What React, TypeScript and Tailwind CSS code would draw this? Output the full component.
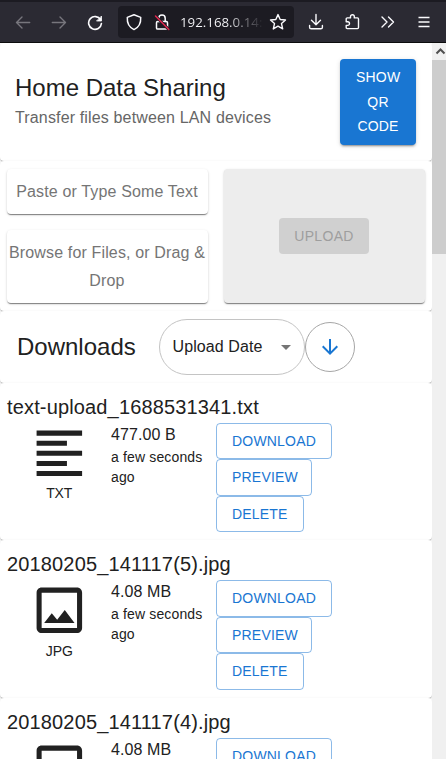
import React from "react";

const PAPER =
  "rounded bg-white shadow-[0px_2px_1px_-1px_rgba(0,0,0,0.2),0px_1px_1px_0px_rgba(0,0,0,0.14),0px_1px_3px_0px_rgba(0,0,0,0.12)]";

const RAISED =
  "rounded shadow-[0px_2px_1px_-1px_rgba(0,0,0,0.3),0px_1px_1px_0px_rgba(0,0,0,0.2),0px_1px_3px_0px_rgba(0,0,0,0.14)]";

function ToolIcon({ children, dim }: { children: React.ReactNode; dim?: boolean }) {
  return (
    <span className="flex w-9 shrink-0 justify-center">
      <Glyph className={dim ? "text-[#77767d]" : "text-[#fbfbfe]"}>{children}</Glyph>
    </span>
  );
}

function Glyph({ children, className }: { children: React.ReactNode; className?: string }) {
  return (
    <svg
      width="18"
      height="18"
      viewBox="0 0 18 18"
      fill="none"
      stroke="currentColor"
      strokeWidth="1.4"
      strokeLinecap="round"
      strokeLinejoin="round"
      className={`shrink-0 ${className ?? ""}`}
    >
      {children}
    </svg>
  );
}

function BrowserBar() {
  return (
    <header className="flex h-[43px] shrink-0 items-center border-t-2 border-b border-t-[#1c1b22] border-b-[#0c0c0d] bg-[#2b2a33] pl-[5px]">
      <ToolIcon dim>
        <path d="M15.7 9.500H2.500M8 4.100 2.500 9.500 8 14.900" />
      </ToolIcon>
      <ToolIcon dim>
        <path d="M2.300 9.500h13.200M10 4.100 15.500 9.500 10 14.900" />
      </ToolIcon>
      <ToolIcon>
        <path d="M14.600 6.800A6.400 6.400 0 1 0 15.400 10.600" strokeWidth="1.600" />
        <path d="M15.500 3.400v4.600h-4.600z" fill="currentColor" strokeWidth="0.800" />
      </ToolIcon>
      <div className="mr-1 ml-[5px] flex h-8 w-[176px] shrink-0 items-center rounded bg-[#1c1b22]">
        <Glyph className="ml-[7px] text-[#fbfbfe]">
          <path d="M9 1.800 15.700 4.400c.3 4.900-.9 9.500-6.700 12.200C3.200 13.900 2 9.300 2.300 4.400z" strokeWidth="1.500" />
        </Glyph>
        <Glyph className="ml-[10px] text-[#fbfbfe]">
          <path d="M5.800 8.500V5.300a3.200 3.200 0 0 1 6.400 0v3.200" strokeWidth="1.500" />
          <rect x="3.500" y="8.500" width="11" height="7.600" rx="1.200" strokeWidth="1.500" />
          <path d="M2.500 3 15.800 16.500" stroke="#1c1b22" strokeWidth="3" />
          <path d="M2.500 3 15.800 16.500" stroke="#e22850" strokeWidth="1.500" />
        </Glyph>
        <span className="ml-[9px] w-[84px] whitespace-nowrap bg-linear-to-r from-[#fbfbfe] from-55% to-[#1c1b22] bg-clip-text font-['Open_Sans',sans-serif] text-[13.3px] leading-5 text-transparent">
          192.168.0.14:
        </span>
        <Glyph className="ml-[5px] text-[#fbfbfe]">
          <path d="m9 1.600 2.200 4.900 5.300.5-4 3.600 1.200 5.300L9 13.200l-4.700 2.700 1.200-5.300-4-3.600 5.300-.5z" />
        </Glyph>
      </div>
      <ToolIcon>
        <path d="M9 1.500v10M4.500 7.300 9 11.700l4.500-4.400M2.600 12.500v1.700a1.600 1.600 0 0 0 1.600 1.600h9.600a1.600 1.600 0 0 0 1.600-1.600v-1.700" />
      </ToolIcon>
      <ToolIcon>
        <path d="M3.200 7.200V5.900a1 1 0 0 1 1-1h3.300V3.600a1.900 1.900 0 0 1 3.800 0v1.300h3.200a1 1 0 0 1 1 1v8.700a1 1 0 0 1-1 1H4.200a1 1 0 0 1-1-1v-2.200h1.500a1.500 1.500 0 0 0 0-3.600H3.200z" />
      </ToolIcon>
      <ToolIcon>
        <path d="M3 4 8 9l-5 5M9.500 4l5 5-5 5" />
      </ToolIcon>
      <ToolIcon>
        <path d="M3.500 4.500h11M3.500 9h11M3.500 13.500h11" strokeLinecap="butt" />
      </ToolIcon>
    </header>
  );
}

function OutlinedButton({ children, width }: { children: React.ReactNode; width: string }) {
  return (
    <button
      className={`h-[36.5px] rounded border border-[#1976d2]/50 pl-[15px] text-left text-sm leading-[24.5px] tracking-[0.2px] text-[#1976d2] ${width}`}
    >
      {children}
    </button>
  );
}

function FileCard({ name, kind, size }: { name: string; kind: "TXT" | "JPG"; size: string }) {
  return (
    <article className={`${PAPER} h-[157.5px] shrink-0 px-[7px] py-2`}>
      <h3 className="text-xl leading-8 tracking-[0.15px]">{name}</h3>
      <div className="grid grid-cols-4">
        <div className="flex flex-col items-center">
          <svg width="60.700" height="60.700" viewBox="0 0 24 24" fill="currentColor">
            {kind === "TXT" ? (
              <path d="M15 15H3v2h12v-2zm0-8H3v2h12V7zM3 13h18v-2H3v2zm0 8h18v-2H3v2zM3 3v2h18V3H3z" />
            ) : (
              <path d="M19 5v14H5V5h14m0-2H5c-1.100 0-2 .9-2 2v14c0 1.100.9 2 2 2h14c1.100 0 2-.9 2-2V5c0-1.100-.9-2-2-2zm-4.860 8.860-3 3.870L9 13.140 6 17h12l-3.860-5.140z" />
            )}
          </svg>
          <span className="text-sm leading-5 tracking-[-0.1px]">{kind}</span>
        </div>
        <div className="-ml-[0.5px]">
          <p className="text-base leading-6 tracking-[0.1px]">{size}</p>
          <p className="text-sm leading-5 tracking-[0.15px]">a few seconds ago</p>
        </div>
        <div className="col-span-2 flex flex-col items-start">
          <OutlinedButton width="w-[116px]">DOWNLOAD</OutlinedButton>
          <OutlinedButton width="w-[96px]">PREVIEW</OutlinedButton>
          <OutlinedButton width="w-[88px]">DELETE</OutlinedButton>
        </div>
      </div>
    </article>
  );
}

function Scrollbar() {
  return (
    <div className="flex w-[14px] shrink-0 flex-col bg-[#f0f0f0]">
      <svg width="14" height="17" viewBox="0 0 14 17" fill="none" stroke="#505050" strokeWidth="2">
        <path d="m4.500 10.500 4-4 4 4" />
      </svg>
      <div className="h-[194px] bg-[#cdcdcd]" />
    </div>
  );
}

export default function App() {
  return (
    <div className="flex h-[759px] w-[446px] flex-col overflow-hidden bg-white font-['Liberation_Sans',Arial,sans-serif] text-[#212121]">
      <BrowserBar />
      <div className="flex min-h-0 flex-1">
        <main className="flex flex-1 flex-col overflow-hidden">
          <section className={`${PAPER} flex h-[117.5px] shrink-0 items-center justify-between pr-4 pl-[15px]`}>
            <div>
              <h1 className="text-2xl leading-8">Home Data Sharing</h1>
              <p className="text-base leading-7 tracking-[0.15px] text-[#666666]">
                Transfer files between LAN devices
              </p>
            </div>
            <button className="w-[76px] rounded bg-[#1976d2] px-4 py-1.5 text-sm leading-[24.5px] tracking-[0.2px] text-white shadow-[0px_3px_1px_-2px_rgba(0,0,0,0.2),0px_2px_2px_0px_rgba(0,0,0,0.14),0px_1px_5px_0px_rgba(0,0,0,0.12)]">
              SHOW QR CODE
            </button>
          </section>

          <section className={`${PAPER} grid h-[150px] shrink-0 grid-cols-2 gap-4 pt-[8.5px] pr-[7.5px] pb-[7.500px] pl-[6.500px]`}>
            <div className="flex flex-col justify-between text-center text-base leading-7 tracking-[0.15px] text-[#757575]">
              <div className={`${RAISED} flex h-[45px] items-center justify-center bg-white`}>
                Paste or Type Some Text
              </div>
              <div className={`${RAISED} flex h-[73px] items-center justify-center bg-white`}>
                Browse for Files, or Drag &amp; Drop
              </div>
            </div>
            <div className={`${RAISED} flex items-center justify-center bg-[#ededed]`}>
              <button className="h-[36.5px] w-[90px] rounded bg-[#d0d0d0] text-sm tracking-[0.3px] text-[#9e9e9e]">
                UPLOAD
              </button>
            </div>
          </section>

          <section className={`${PAPER} flex h-[72px] shrink-0 items-center pl-[17px]`}>
            <h2 className="w-[142px] text-2xl leading-8">Downloads</h2>
            <div className="flex h-14 w-[146px] items-center justify-between rounded-full border border-[#c4c4c4] pr-[6px] pl-[12.500px]">
              <span className="text-base tracking-[0.1px]">Upload Date</span>
              <svg width="24" height="24" viewBox="0 0 24 24" fill="#757575">
                <path d="m7 10 5 5 5-5z" />
              </svg>
            </div>
            <button className="flex size-[50px] items-center justify-center rounded-full border border-[#a6a6a6]">
              <svg width="24" height="24" viewBox="0 0 24 24" fill="#1976d2">
                <path d="m20 12-1.410-1.410L13 16.170V4h-2v12.170l-5.580-5.590L4 12l8 8 8-8z" />
              </svg>
            </button>
          </section>

          <FileCard name="text-upload_1688531341.txt" kind="TXT" size="477.00 B" />
          <FileCard name="20180205_141117(5).jpg" kind="JPG" size="4.08 MB" />
          <FileCard name="20180205_141117(4).jpg" kind="JPG" size="4.08 MB" />
        </main>
        <Scrollbar />
      </div>
    </div>
  );
}
